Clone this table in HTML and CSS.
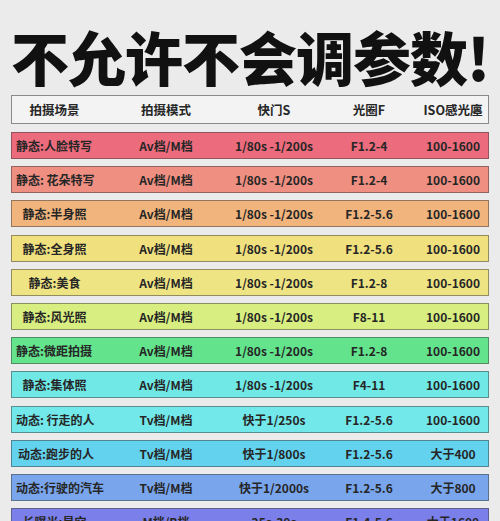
FILE: index.html
```html
<!DOCTYPE html>
<html lang="zh">
<head>
<meta charset="utf-8">
<title>不允许不会调参数!</title>
<link rel="stylesheet" href="styles.css">
</head>
<body>
<div class="page">
  <h1 class="title">不允许不会调参数!</h1>
  <div class="head">
    <span>拍摄场景</span><span>拍摄模式</span><span>快门S</span><span>光圈F</span><span>ISO感光廛</span>
  </div>
  <div class="rows">
    <div class="row c1"><span class="l">静态:人脸特写</span><span>Av档/M档</span><span>1/80s -1/200s</span><span>F1.2-4</span><span>100-1600</span></div>
    <div class="row c2"><span class="l">静态: 花朵特写</span><span>Av档/M档</span><span>1/80s -1/200s</span><span>F1.2-4</span><span>100-1600</span></div>
    <div class="row c3"><span>静态:半身照</span><span>Av档/M档</span><span>1/80s -1/200s</span><span>F1.2-5.6</span><span>100-1600</span></div>
    <div class="row c4"><span>静态:全身照</span><span>Av档/M档</span><span>1/80s -1/200s</span><span>F1.2-5.6</span><span>100-1600</span></div>
    <div class="row c5"><span>静态:美食</span><span>Av档/M档</span><span>1/80s -1/200s</span><span>F1.2-8</span><span>100-1600</span></div>
    <div class="row c6"><span>静态:风光照</span><span>Av档/M档</span><span>1/80s -1/200s</span><span>F8-11</span><span>100-1600</span></div>
    <div class="row c7"><span class="l">静态:微距拍摄</span><span>Av档/M档</span><span>1/80s -1/200s</span><span>F1.2-8</span><span>100-1600</span></div>
    <div class="row c8"><span>静态:集体照</span><span>Av档/M档</span><span>1/80s -1/200s</span><span>F4-11</span><span>100-1600</span></div>
    <div class="row c9"><span class="l">动态: 行走的人</span><span>Tv档/M档</span><span>快于1/250s</span><span>F1.2-5.6</span><span>100-1600</span></div>
    <div class="row c10"><span class="l l2">动态:跑步的人</span><span>Tv档/M档</span><span>快于1/800s</span><span>F1.2-5.6</span><span>大于400</span></div>
    <div class="row c11"><span class="l">动态:行驶的汽车</span><span>Tv档/M档</span><span>快于1/2000s</span><span>F1.2-5.6</span><span>大于800</span></div>
    <div class="row c12"><span>长曝光:星空</span><span>M档/B档</span><span>25s-30s</span><span>F1.4-5.6</span><span>大于1600</span></div>
  </div>
</div>
</body>
</html>
```
FILE: styles.css
```css
* { box-sizing: border-box; }
html, body { margin: 0; padding: 0; }
body {
  background: #ebebeb;
  font-family: "Noto Sans CJK SC", "Noto Sans", sans-serif;
  color: #262626;
  width: 500px;
  height: 521px;
  overflow: hidden;
}
.page { padding: 0 11px; }
.title {
  margin: 0;
  height: 95px;
  padding-top: 27px;
  font-size: 58px;
  line-height: 58px;
  font-weight: 900;
  letter-spacing: -1px;
  text-align: center;
  color: #111;
  white-space: nowrap;
}
.head, .row {
  display: grid;
  grid-template-columns: 85px 138px 78px 112px 56px;
  align-items: center;
  font-size: 12px;
  font-weight: 700;
  white-space: nowrap;
}
.head span, .row span {
  display: flex;
  justify-content: center;
}
.head {
  height: 29px;
  background: #f3f3f3;
  border: 1px solid #8a8a8a;
  font-size: 12.5px;
}
.rows {
  display: flex;
  flex-direction: column;
  gap: 7.2px;
  padding-top: 8px;
}
.row {
  height: 27px;
  flex: none;
  border: 1px solid rgba(70, 70, 70, 0.55);
}
.row span.l { justify-content: flex-start; padding-left: 4px; }
.row span.l2 { padding-left: 6px; }
.c1 { background: #ec6b7c; }
.c2 { background: #ef8f81; }
.c3 { background: #f0b47c; }
.c4 { background: #f0e07e; }
.c5 { background: #efe484; }
.c6 { background: #d8ee80; }
.c7 { background: #62e38c; }
.c8 { background: #6fe8e6; }
.c9 { background: #72e8ea; }
.c10 { background: #62d2ef; }
.c11 { background: #78a5ec; }
.c12 { background: #7b7fe9; }
```
